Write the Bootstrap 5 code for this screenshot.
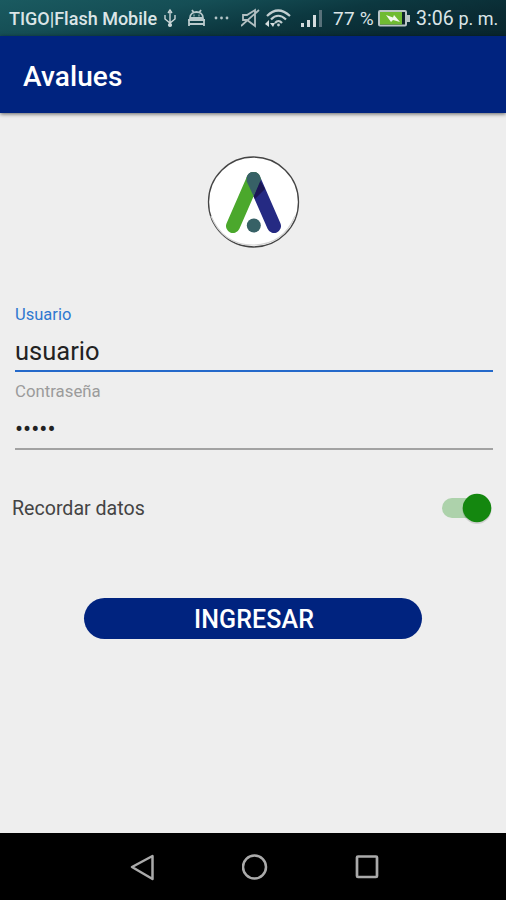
<!DOCTYPE html>
<html lang="es">
<head>
<meta charset="utf-8">
<meta name="viewport" content="width=device-width, initial-scale=1">
<title>Avalues</title>
<link href="https://cdn.jsdelivr.net/npm/bootstrap@5.3.0/dist/css/bootstrap.min.css" rel="stylesheet">
<style>
body{font-family:Roboto,"Liberation Sans",sans-serif;background:#eee;overflow:hidden}
svg{display:block;flex:none}
.status-bar{height:36px;padding-left:9px;color:#dbe5e7;font-size:18px;line-height:38px;white-space:nowrap;background:linear-gradient(170deg,#1a5a60 0%,#154e55 30%,#0c3840 55%,#0a2b33 80%,#09262e 100%)}
.carrier{width:154px;font-weight:500;padding-top:1px}
.battery-level{width:45px;font-size:19px;letter-spacing:.2px;padding-top:1px}
.clock{width:88px;font-size:19.5px;padding-top:2px}
.clock-suffix{font-size:18px}
.app-bar{height:77px;background:#00237f;padding:5px 23px 0;box-shadow:0 1px 4px rgba(0,0,0,.6);position:relative}
.app-title{font-size:28px;font-weight:500;letter-spacing:.1px;line-height:1}
.login-form{padding:0 13px 0 15px;margin-top:55px}
.field-label{font-size:16.5px;line-height:22px;color:#9b9b9b}
.field-label.active{color:#2f78d0}
.field-label.muted{font-size:16.800px;margin-top:8px}
.field-input{height:48px;border:0;border-bottom:2px solid #a2a2a2;border-radius:0;background:transparent!important;padding:8px 0 0;font-size:24px;color:#222;box-shadow:none!important}
.user-input{height:46px;padding-top:5px;border-bottom-color:#2469ca;font-size:25.500px}
.remember{padding:0 14px 0 12px;margin-top:41px;height:34px}
.remember-label{font-size:19.600px;color:#444;line-height:34px;padding-top:2px}
.btn-login{width:338px;height:41px;background:#00237f!important;color:#fff!important;border:0;font-size:25px;font-weight:500;line-height:44px;padding:0 0 0 2px;letter-spacing:.1px}
.nav-keys{height:67px;background:#000;padding-left:129px;gap:86px}
</style>
<script src="https://cdn.jsdelivr.net/npm/bootstrap@5.3.0/dist/js/bootstrap.bundle.min.js"></script>
</head>
<body>
<div class="vh-100 d-flex flex-column">
<div class="status-bar d-flex align-items-center">
<span class="carrier">TIGO|Flash Mobile</span>
<svg width="24" height="36" fill="none" stroke="#cad6d8" stroke-width="1.4"><path d="M7 12v13M2 15v4l5 4 5-4v-4M5 13l2-3 2 3"/><circle cx="7" cy="25" r="1.4" fill="#cad6d8"/></svg>
<svg width="27" height="36" fill="none" stroke="#b9c9cc" stroke-width="1.800"><path d="M3 18c0-8 13-8 13 0zM5 10l2 3M14 10l-2 3M1 20h17M2 20v6M17 20v6M2 24h15"/><path d="M6.5 15.500h1M11.500 15.500h1"/></svg>
<svg width="27" height="36" fill="#b4c5c8"><circle cx="2" cy="18" r="1.4"/><circle cx="7.500" cy="18" r="1.400"/><circle cx="13" cy="18" r="1.400"/></svg>
<svg width="24" height="36" fill="none" stroke="#b2bfc2" stroke-width="1.8"><path d="M2 15h4l8-5v16l-8-6H2zM0 26L18 10"/></svg>
<svg width="36" height="36" fill="none" stroke="#c3cfd1" stroke-width="2.200"><path d="M2 16Q13 5 25 16M6 19.500Q13 12 21 19.500M10 23Q13.500 19 17 23"/><circle cx="13.500" cy="25" r="1.400" fill="#c3cfd1" stroke="none"/><path d="M0 24l4-4V27zM8 27l-3-4h5z" fill="#d5dddf" stroke="none"/></svg>
<svg width="32" height="36" fill="#d4dbdd"><path d="M0 23h3v4H0zM6 20h3v7H6zM12 15h3v12h-3z"/><path d="M18 10h3v17h-3z" fill="#58717a"/></svg>
<span class="battery-level">77 %</span>
<svg width="38" height="36"><rect x="1" y="11" width="27" height="14.500" rx="1" fill="#10242a" stroke="#b9c4c6" stroke-width="2"/><path d="M2 12h22v12.500H2z" fill="#70bb32"/><path d="M29 15h3v7h-3z" fill="#b9c4c6"/><path d="M8 15l7 2.500 1-2.500 6 7-7-2-2 2z" fill="#f3f8ee"/></svg>
<span class="clock">3:06 <span class="clock-suffix">p. m.</span></span>
</div>
<nav class="navbar app-bar"><h1 class="app-title text-white m-0">Avalues</h1></nav>
<main class="flex-grow-1">
<svg class="mx-auto" style="margin-top:42px" width="94" height="94" viewBox="0 0 94 94"><circle cx="47.500" cy="47" r="45" fill="#fff" stroke="#444" stroke-width="1.300"/><path d="M5 61Q17 90 47 90T89 61" fill="none" stroke="#d4d4d4" stroke-width="1.200"/><g stroke-width="14" stroke-linecap="round"><path d="M47.500 24L68 71" stroke="#252a83"/><path d="M47.500 24L27 71" stroke="#4ba82c"/></g><path d="M41 21.500A7 7 0 0 1 54 21.500L54.500 26L47.500 41L40.500 26Z" fill="#376166"/><path d="M54.300 26L47.700 41.500L49 44L59 34Z" fill="#1b1655"/><circle cx="47.800" cy="70.500" r="7" fill="#376166"/></svg>
<form class="login-form">
<label class="field-label active d-block" for="user">Usuario</label>
<input id="user" class="form-control field-input user-input" type="text" value="usuario">
<label class="field-label muted d-block" for="pass">Contraseña</label>
<input id="pass" class="form-control field-input" type="password" value="datos">
</form>
<div class="remember d-flex justify-content-between align-items-center"><span class="remember-label">Recordar datos</span>
<svg width="51" height="36"><rect x="1" y="8" width="42" height="20" rx="10" fill="#add2ab"/><circle cx="36" cy="19.500" r="14.500" fill="#000" opacity=".12"/><circle cx="36" cy="18" r="14.300" fill="#14870f"/></svg></div>
<button class="btn btn-login rounded-pill d-block mx-auto" style="margin-top:73px" type="button">INGRESAR</button>
</main>
<footer class="nav-keys d-flex align-items-center">
<svg width="27" height="30" fill="none" stroke="#aaa" stroke-width="2.500"><path d="M3 15L23.500 4v23z" stroke-linejoin="round"/></svg>
<svg width="27" height="30" fill="none" stroke="#aaa" stroke-width="2.500"><circle cx="12.500" cy="15" r="11.500"/></svg>
<svg width="27" height="30" fill="none" stroke="#aaa" stroke-width="2.700"><rect x="2" y="4.500" width="20" height="20.500" rx="1"/></svg>
</footer>
</div>
</body>
</html>
